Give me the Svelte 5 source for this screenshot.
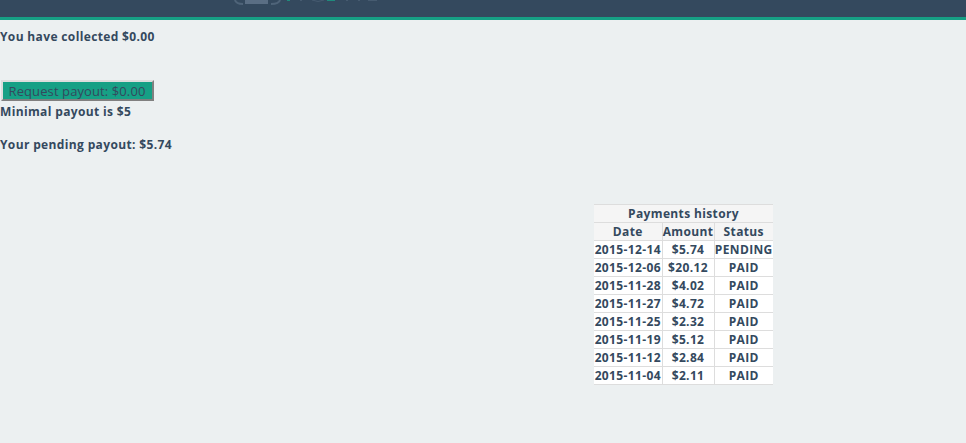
<script>
  const rows = [
    ['2015-12-14', '$5.74', 'PENDING'],
    ['2015-12-06', '$20.12', 'PAID'],
    ['2015-11-28', '$4.02', 'PAID'],
    ['2015-11-27', '$4.72', 'PAID'],
    ['2015-11-25', '$2.32', 'PAID'],
    ['2015-11-19', '$5.12', 'PAID'],
    ['2015-11-12', '$2.84', 'PAID'],
    ['2015-11-04', '$2.11', 'PAID']
  ];
</script>

<div class="page">
  <header>
    <div class="logo">
      <!-- logo is cut off by the top of the page, only its lower edge shows -->
      <svg width="150" height="6" viewBox="0 0 150 6">
        <path d="M1 0 Q2 4 9 4" fill="none" stroke="#4f6479" stroke-width="2" />
        <path d="M46 0 Q45 4 37 4" fill="none" stroke="#4f6479" stroke-width="2" />
        <rect x="11" y="0" width="23" height="4" fill="#5a6e84" />
        <rect x="53" y="0" width="3" height="1" fill="#1f8a7c" />
        <rect x="66" y="0" width="2" height="1" fill="#465b70" />
        <path d="M78 0 Q84 3 90 0" fill="none" stroke="#465b70" stroke-width="1" />
        <rect x="93" y="0" width="8" height="1" fill="#1f8a7c" />
        <rect x="112" y="0" width="2" height="1" fill="#465b70" />
        <rect x="124" y="0" width="2" height="1" fill="#465b70" />
        <rect x="134" y="0" width="9" height="1" fill="#465b70" />
      </svg>
    </div>
  </header>

  <p class="collected">You have collected $0.00</p>
  <button class="payout">Request payout: $0.00</button>
  <p class="minimal">Minimal payout is $5</p>
  <p class="pending">Your pending payout: $5.74</p>

  <div class="history">
    <table>
      <colgroup>
        <col class="date" />
        <col class="amount" />
        <col class="status" />
      </colgroup>
      <thead>
        <tr><th colspan="3">Payments history</th></tr>
        <tr><th>Date</th><th>Amount</th><th>Status</th></tr>
      </thead>
      <tbody>
        {#each rows as row}
          <tr>
            <td>{row[0]}</td>
            <td>{row[1]}</td>
            <td>{row[2]}</td>
          </tr>
        {/each}
      </tbody>
    </table>
  </div>
</div>

<style>
  :global(body) {
    margin: 0;
    background: #ecf0f1;
  }

  .page {
    height: 443px;
    overflow: hidden;
    font-family: "Open Sans", sans-serif;
    font-size: 12px;
    font-weight: 700;
    line-height: 18px;
    letter-spacing: 0.36px;
    color: #34495e;
  }

  header {
    height: 17px;
    background: #34495e;
    border-bottom: 3px solid #16a085;
    padding-left: 234px;
  }

  .logo {
    display: flex;
    height: 6px;
  }

  p {
    margin: 0;
  }

  .collected {
    margin-top: 8px;
  }

  .payout {
    display: block;
    margin: 34px 0 0 1px;
    width: 153px;
    height: 21px;
    padding: 0 1px 2px 0;
    border: 2px solid;
    border-color: #ddd #808080 #808080 #ddd;
    background: #16a085;
    color: #34495e;
    font-family: inherit;
    font-size: 13px;
    font-weight: 400;
    letter-spacing: 0.1px;
  }

  .minimal {
    margin-top: 2px;
  }

  .pending {
    margin-top: 15px;
  }

  .history {
    margin-top: 50px;
    padding-left: 594px;
  }

  table {
    width: 179px;
    border-collapse: collapse;
    table-layout: fixed;
    background: #fff;
    text-align: center;
    line-height: 17px;
  }

  th,
  td {
    height: 17px;
    padding: 0;
    border: 1px solid #ddd;
    white-space: nowrap;
  }

  th {
    background: #f5f5f5;
  }

  tr > :first-child {
    border-left: 0;
  }

  tr > :last-child {
    border-right: 0;
  }

  .date {
    width: 68px;
  }

  .amount {
    width: 52px;
  }

  .status {
    width: 59px;
  }
</style>
